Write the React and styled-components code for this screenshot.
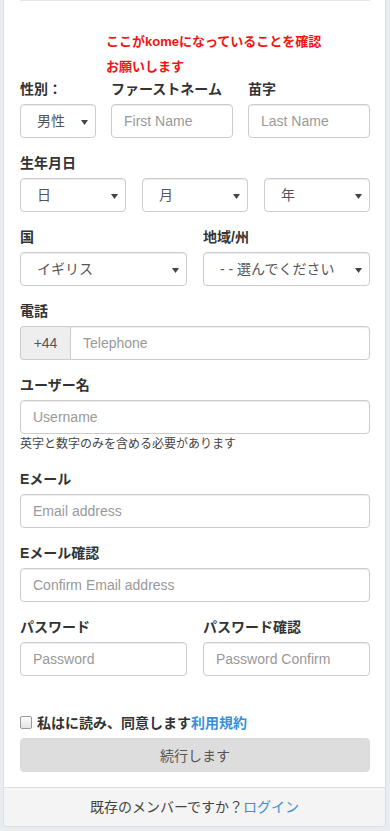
import React from "react";
import styled, { createGlobalStyle } from "styled-components";

const GlobalStyle = createGlobalStyle`
  * { box-sizing: border-box; }
  html, body { margin: 0; padding: 0; background: #e9edf2; }
  body {
    font-family: "Liberation Sans", "Noto Sans CJK JP", sans-serif;
    font-size: 14px;
    color: #333;
  }
`;

const FONT = `"Liberation Sans", "Noto Sans CJK JP", sans-serif`;

const Page = styled.div`
  padding: 0 4px 4px 3px;
`;

const Card = styled.div`
  background: #fff;
  border: 1px solid #dcdfe3;
  border-top: none;
  border-radius: 0 0 4px 4px;
  overflow: hidden;
`;

const Body = styled.div`
  padding: 0 15px 0 16px;
`;

const Divider = styled.div`
  height: 1px;
  background: #e6e6e6;
`;

const Notice = styled.div`
  padding: 28px 0 0 86px;
  color: #f01414;
  font-weight: bold;
  font-size: 13px;
  line-height: 25px;
  white-space: nowrap;
`;

const Row = styled.div`
  display: grid;
  grid-template-columns: ${(p) => p.$cols};
  column-gap: ${(p) => p.$gap}px;
  margin-bottom: ${(p) => (p.$mb != null ? p.$mb : 15)}px;
`;

const Group = styled.div`
  display: flex;
  flex-direction: column;
  margin-bottom: ${(p) => (p.$mb != null ? p.$mb : 15)}px;
`;

const Field = styled.div`
  display: flex;
  flex-direction: column;
  min-width: 0;
`;

const Label = styled.label`
  font-weight: bold;
  font-size: 14px;
  line-height: 20px;
  margin-bottom: 5px;
  color: #333;
  white-space: nowrap;
`;

const Input = styled.input`
  display: block;
  width: 100%;
  height: 34px;
  padding: 6px 12px;
  font-family: ${FONT};
  font-size: 14px;
  color: #555;
  background: #fff;
  border: 1px solid #ccc;
  border-radius: ${(p) => (p.$joined ? "0 4px 4px 0" : "4px")};
  box-shadow: inset 0 1px 1px rgba(0, 0, 0, 0.075);
  outline: none;
  &::placeholder {
    color: #999;
  }
`;

const SelectWrap = styled.div`
  position: relative;
`;

const Select = styled.select`
  display: block;
  width: 100%;
  height: 34px;
  padding: 6px 20px 6px 16px;
  font-family: ${FONT};
  font-size: 14px;
  color: #555;
  background: #fff;
  border: 1px solid #ccc;
  border-radius: 4px;
  box-shadow: inset 0 1px 1px rgba(0, 0, 0, 0.075);
  appearance: none;
  -webkit-appearance: none;
  outline: none;
`;

const Arrow = styled.svg`
  position: absolute;
  right: 8px;
  top: 16px;
  width: 7px;
  height: 5px;
  pointer-events: none;
`;

const SelectBox = ({ options }) => (
  <SelectWrap>
    <Select defaultValue={options[0]}>
      {options.map((o) => (
        <option key={o}>{o}</option>
      ))}
    </Select>
    <Arrow viewBox="0 0 7 5">
      <path d="M0 0 H7 L3.5 5 Z" fill="#444" />
    </Arrow>
  </SelectWrap>
);

const InputGroup = styled.div`
  display: flex;
`;

const Addon = styled.span`
  flex: 0 0 50px;
  height: 34px;
  display: flex;
  align-items: center;
  justify-content: center;
  background: #eee;
  border: 1px solid #ccc;
  border-right: none;
  border-radius: 4px 0 0 4px;
  color: #555;
  font-size: 14px;
`;

const Help = styled.div`
  font-size: 12px;
  line-height: 16px;
  margin-top: 2px;
  color: #444;
`;

const CheckLine = styled.label`
  display: flex;
  align-items: center;
  height: 20px;
  font-weight: bold;
  font-size: 14px;
  color: #333;
  white-space: nowrap;
`;

const Check = styled.input`
  appearance: none;
  -webkit-appearance: none;
  width: 12px;
  height: 13px;
  margin: 0 5px 0 0;
  border: 1px solid #9a9a9a;
  border-radius: 2px;
  background: linear-gradient(#fcfcfc, #e4e4e4);
`;

const Link = styled.a`
  color: #3a8fd6;
  text-decoration: none;
  font-weight: ${(p) => (p.$bold ? "bold" : "normal")};
`;

const Button = styled.button`
  display: block;
  width: 100%;
  height: 34px;
  margin: 6px 0 15px;
  font-family: ${FONT};
  font-size: 14px;
  color: #555;
  background: #dddddd;
  border: 1px solid #dcdcdc;
  border-radius: 4px;
`;

const Footer = styled.div`
  border-top: 1px solid #dcdfe3;
  background: #f4f4f4;
  padding: 9px 15px;
  line-height: 20px;
  text-align: center;
  color: #444;
  font-size: 14px;
`;

export default function App() {
  return (
    <>
      <GlobalStyle />
      <Page>
        <Card>
          <Body>
            <Divider />
            <Notice>
              ここがkomeになっていることを確認
              <br />
              お願いします
            </Notice>

            <Row $cols="76px 1fr 1fr" $gap={15}>
              <Field>
                <Label>性別：</Label>
                <SelectBox options={["男性", "女性"]} />
              </Field>
              <Field>
                <Label>ファーストネーム</Label>
                <Input placeholder="First Name" />
              </Field>
              <Field>
                <Label>苗字</Label>
                <Input placeholder="Last Name" />
              </Field>
            </Row>

            <Group>
              <Label>生年月日</Label>
              <Row $cols="1fr 1fr 1fr" $gap={16} $mb={0}>
                <SelectBox options={["日"]} />
                <SelectBox options={["月"]} />
                <SelectBox options={["年"]} />
              </Row>
            </Group>

            <Row $cols="1fr 1fr" $gap={16}>
              <Field>
                <Label>国</Label>
                <SelectBox options={["イギリス"]} />
              </Field>
              <Field>
                <Label>地域/州</Label>
                <SelectBox options={["- - 選んでください"]} />
              </Field>
            </Row>

            <Group>
              <Label>電話</Label>
              <InputGroup>
                <Addon>+44</Addon>
                <Input $joined placeholder="Telephone" />
              </InputGroup>
            </Group>

            <Group $mb={17}>
              <Label>ユーザー名</Label>
              <Input placeholder="Username" />
              <Help>英字と数字のみを含める必要があります</Help>
            </Group>

            <Group>
              <Label>Eメール</Label>
              <Input placeholder="Email address" />
            </Group>

            <Group>
              <Label>Eメール確認</Label>
              <Input placeholder="Confirm Email address" />
            </Group>

            <Row $cols="1fr 1fr" $gap={16} $mb={36}>
              <Field>
                <Label>パスワード</Label>
                <Input type="password" placeholder="Password" />
              </Field>
              <Field>
                <Label>パスワード確認</Label>
                <Input type="password" placeholder="Password Confirm" />
              </Field>
            </Row>

            <CheckLine>
              <Check type="checkbox" />
              私はに読み、同意します<Link $bold href="#">利用規約</Link>
            </CheckLine>
            <Button type="button">続行します</Button>
          </Body>
          <Footer>
            既存のメンバーですか？<Link href="#">ログイン</Link>
          </Footer>
        </Card>
      </Page>
    </>
  );
}
